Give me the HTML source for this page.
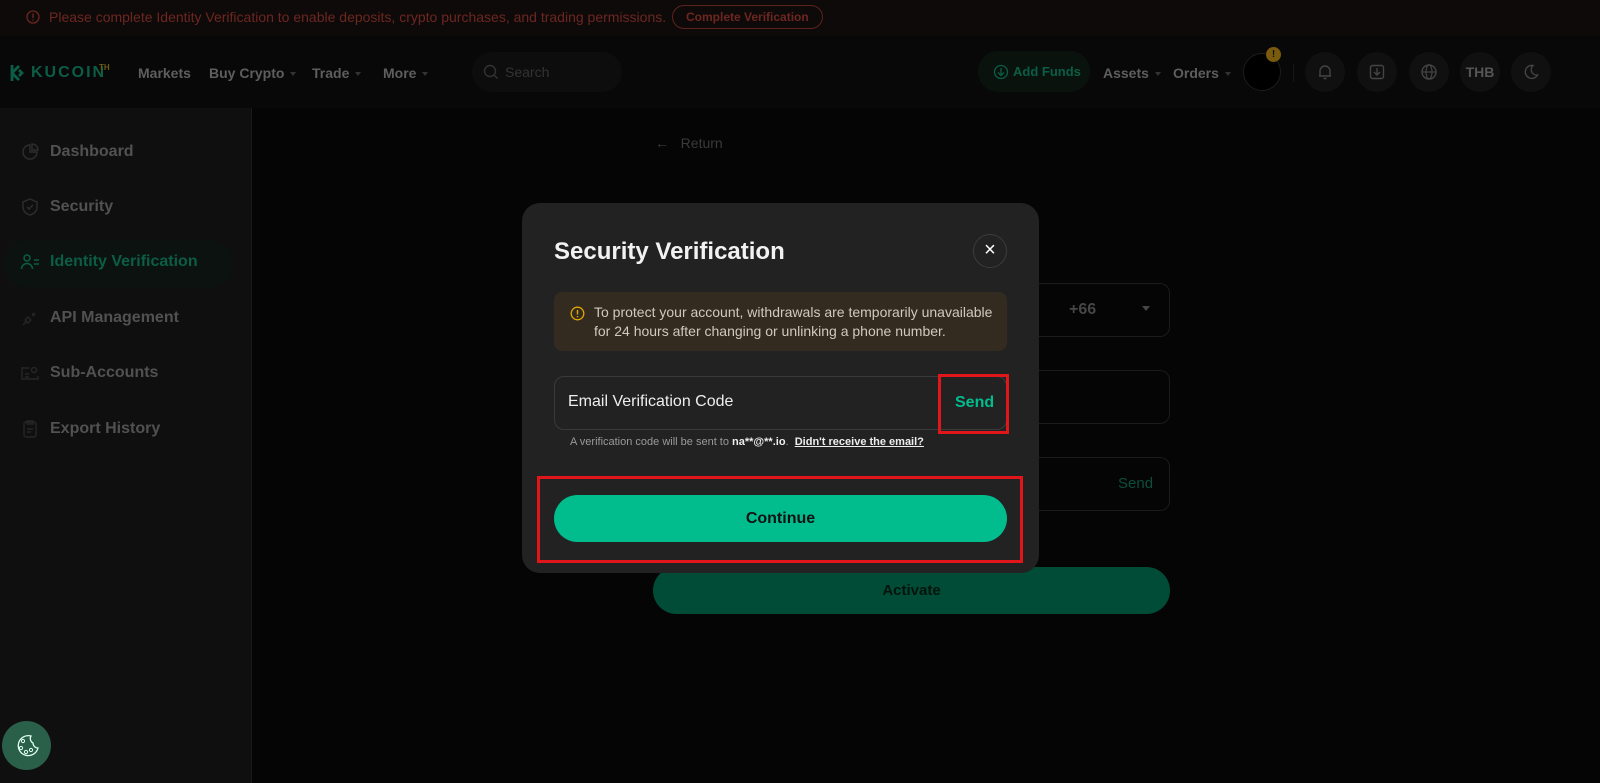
<!DOCTYPE html>
<html><head><meta charset="utf-8"><style>
*{box-sizing:border-box;margin:0;padding:0}
body{width:1600px;height:783px;overflow:hidden;background:#050505;font-family:"Liberation Sans",Arial,sans-serif;position:relative}
.abs{position:absolute}
.banner{left:0;top:0;width:1600px;height:36px;background:#0d0a09;color:#6e2620;font-size:14px}
.hdr{left:0;top:36px;width:1600px;height:72px;background:#080808}
.nav{color:#5e5e5e;font-size:14px;font-weight:bold}
.caret{display:inline-block;border:3px solid transparent;border-top:4px solid #333;margin-left:6px;vertical-align:-1px}
.icb{width:40px;height:40px;border-radius:20px;background:#101010;top:52px}
.side{left:0;top:108px;width:252px;height:675px;background:#0f0f0f;border-right:1px solid #1a1a1a}
.si{left:20px;color:#515151;font-size:16px;font-weight:bold;height:20px;display:flex;align-items:center}
.si svg{margin-right:10px}
.field{border:1px solid #1b1b1b;border-radius:10px;left:653px;width:517px}
.modal{left:522px;top:203px;width:517px;height:370px;background:#222;border-radius:18px}
</style></head><body>
<div class="abs banner">
 <svg class="abs" style="left:26px;top:10px" width="14" height="14" viewBox="0 0 14 14"><circle cx="7" cy="7" r="6" fill="none" stroke="#6e2620" stroke-width="1.3"/><path d="M7 3.5v4.5M7 9.5v1" stroke="#6e2620" stroke-width="1.4"/></svg>
 <span class="abs" style="left:49px;top:9px">Please complete Identity Verification to enable deposits, crypto purchases, and trading permissions.</span>
 <div class="abs" style="left:672px;top:5px;width:151px;height:24px;border:1px solid #5e221c;border-radius:12px;font-size:12px;font-weight:bold;line-height:22px;padding-left:13px">Complete Verification →</div>
</div>
<div class="abs hdr">
 <svg class="abs" style="left:9px;top:27px" width="20" height="20" viewBox="0 0 20 20"><path d="M3 2v16M3 10l7-7M3 10l7 7M10 7l3 3-3 3" stroke="#0b5e45" stroke-width="2.8" fill="none"/></svg>
 <span class="abs" style="left:31px;top:28px;color:#0b5e45;font-weight:bold;font-size:16px;letter-spacing:2px">KUCOIN</span><span class="abs" style="left:99px;top:27px;color:#6a5a10;font-size:8px;font-weight:bold">TH</span>
 <span class="abs nav" style="left:138px;top:29px">Markets</span>
 <span class="abs nav" style="left:209px;top:29px">Buy Crypto<i class="caret"></i></span>
 <span class="abs nav" style="left:312px;top:29px">Trade<i class="caret"></i></span>
 <span class="abs nav" style="left:383px;top:29px">More<i class="caret"></i></span>
 <div class="abs" style="left:472px;top:16px;width:150px;height:40px;border-radius:20px;background:#0d0d0d"></div>
 <svg class="abs" style="left:483px;top:28px" width="16" height="16" viewBox="0 0 16 16"><circle cx="7" cy="7" r="5.5" fill="none" stroke="#333" stroke-width="1.4"/><path d="M11 11l3.5 3.5" stroke="#333" stroke-width="1.4"/></svg>
 <span class="abs" style="left:505px;top:28px;color:#333;font-size:14px">Search</span>
 <div class="abs" style="left:978px;top:15px;width:112px;height:41px;border-radius:20px;background:#0a120e"></div>
 <svg class="abs" style="left:993px;top:28px" width="16" height="16" viewBox="0 0 16 16"><circle cx="8" cy="8" r="6.5" fill="none" stroke="#0b5e45" stroke-width="1.3"/><path d="M8 4v7M5 8.5l3 3 3-3" stroke="#0b5e45" stroke-width="1.3" fill="none"/></svg>
 <span class="abs" style="left:1013px;top:28px;color:#0b5e45;font-weight:bold;font-size:13px">Add Funds</span>
 <span class="abs nav" style="left:1103px;top:29px">Assets<i class="caret"></i></span>
 <span class="abs nav" style="left:1173px;top:29px">Orders<i class="caret"></i></span>
 <div class="abs" style="left:1243px;top:17px;width:38px;height:38px;border-radius:19px;background:#000;border:1px solid #1c1c1c"></div>
 <div class="abs" style="left:1266px;top:11px;width:15px;height:15px;border-radius:8px;background:#7a5a0c;color:#111;font-size:10px;text-align:center;line-height:15px;font-weight:bold">!</div>
 <div class="abs" style="left:1293px;top:28px;width:1px;height:18px;background:#151515"></div>
</div>
<div class="abs icb" style="left:1305px"><svg style="margin:11px" width="18" height="18" viewBox="0 0 18 18"><path d="M4 13V8a5 5 0 0110 0v5H4zM3 13h12M7.5 15.5h3" stroke="#444" stroke-width="1.4" fill="none"/></svg></div>
<div class="abs icb" style="left:1357px"><svg style="margin:11px" width="18" height="18" viewBox="0 0 18 18"><rect x="2.5" y="2.5" width="13" height="13" rx="2" stroke="#444" stroke-width="1.4" fill="none"/><path d="M9 5v7M6 9l3 3 3-3" stroke="#444" stroke-width="1.4" fill="none"/></svg></div>
<div class="abs icb" style="left:1409px"><svg style="margin:11px" width="18" height="18" viewBox="0 0 18 18"><circle cx="9" cy="9" r="7" stroke="#444" stroke-width="1.4" fill="none"/><ellipse cx="9" cy="9" rx="3" ry="7" stroke="#444" stroke-width="1.2" fill="none"/><path d="M2 9h14" stroke="#444" stroke-width="1.2"/></svg></div>
<div class="abs icb" style="left:1460px;color:#555;font-weight:bold;font-size:14px;text-align:center;line-height:40px">THB</div>
<div class="abs icb" style="left:1511px"><svg style="margin:11px" width="18" height="18" viewBox="0 0 18 18"><path d="M11 2.5A6.5 6.5 0 1015.5 12 5.5 5.5 0 0111 2.5z" stroke="#444" stroke-width="1.4" fill="none"/></svg></div>

<div class="abs side"></div>
<div class="abs" style="left:4px;top:240px;width:230px;height:48px;border-radius:24px;background:#0b120f"></div>
<div class="abs si" style="top:142px"><svg width="20" height="20" viewBox="0 0 20 20"><path d="M10 3a7 7 0 107 7h-7z M12 2v6h6a6 6 0 00-6-6z" stroke="#2e2e2e" stroke-width="1.4" fill="none"/></svg>Dashboard</div>
<div class="abs si" style="top:197px"><svg width="20" height="20" viewBox="0 0 20 20"><path d="M10 2l7 3v5c0 4-3 7-7 8-4-1-7-4-7-8V5z M7 10l2 2 4-4" stroke="#2e2e2e" stroke-width="1.4" fill="none"/></svg>Security</div>
<div class="abs si" style="top:252px;color:#0b5e45"><svg width="20" height="20" viewBox="0 0 20 20"><circle cx="7" cy="6" r="3" stroke="#0b5e45" stroke-width="1.5" fill="none"/><path d="M1.5 17a5.5 5.5 0 0111 0M14 8h5M14 12h5" stroke="#0b5e45" stroke-width="1.5" fill="none"/></svg>Identity Verification</div>
<div class="abs si" style="top:308px"><svg width="20" height="20" viewBox="0 0 20 20"><path d="M3 17l4-4M8 9l3 3-3 3-3-3zM12 8l3-3M12 5l3 3" stroke="#262626" stroke-width="1.4" fill="none"/></svg>API Management</div>
<div class="abs si" style="top:363px"><svg width="20" height="20" viewBox="0 0 20 20"><path d="M2 5h7M2 4v12h16v-3M5 11h4M5 14h4" stroke="#262626" stroke-width="1.4" fill="none"/><circle cx="14" cy="7" r="2.5" stroke="#262626" stroke-width="1.4" fill="none"/></svg>Sub-Accounts</div>
<div class="abs si" style="top:419px"><svg width="20" height="20" viewBox="0 0 20 20"><rect x="4" y="3" width="12" height="15" rx="2" stroke="#262626" stroke-width="1.4" fill="none"/><path d="M7 2h6v3H7zM7 10h6M7 13h4" stroke="#262626" stroke-width="1.4" fill="none"/></svg>Export History</div>
<div class="abs" style="left:2px;top:721px;width:49px;height:49px;border-radius:25px;background:#2a5f4a"><svg style="margin:10px" width="29" height="29" viewBox="0 0 29 29"><path d="M19 5a10 10 0 1 0 7 12 5 5 0 0 1-5-5 5 5 0 0 1-2-7z" stroke="#dfe" stroke-width="1.3" fill="none"/><circle cx="11" cy="10" r="1.6" stroke="#dfe" fill="none"/><circle cx="9" cy="17" r="1.6" stroke="#dfe" fill="none"/><circle cx="14" cy="21" r="1.6" stroke="#dfe" fill="none"/><circle cx="19" cy="19" r="1.6" stroke="#dfe" fill="none"/></svg></div>

<span class="abs" style="left:655px;top:135px;color:#3a3a3a;font-size:14px">←&nbsp;&nbsp;&nbsp;Return</span>
<div class="abs field" style="top:283px;height:54px"><span class="abs" style="left:415px;top:17px;color:#464646;font-size:16px;font-weight:bold">+66</span><i class="abs" style="left:488px;top:22px;border:4px solid transparent;border-top:5px solid #464646"></i></div>
<div class="abs field" style="top:370px;height:54px"></div>
<div class="abs field" style="top:457px;height:54px"><span class="abs" style="left:464px;top:17px;color:#0b4e3a;font-size:15px">Send</span></div>
<div class="abs" style="left:653px;top:567px;width:517px;height:47px;border-radius:24px;background:#004c36;color:#06140e;font-weight:bold;font-size:15px;text-align:center;line-height:47px">Activate</div>

<div class="abs modal">
 <div class="abs" style="left:32px;top:35px;color:#f2f2f2;font-size:24px;font-weight:bold">Security Verification</div>
 <div class="abs" style="left:451px;top:31px;width:34px;height:34px;border-radius:17px;border:1px solid #3c3c3c;color:#fff;text-align:center;line-height:31px;font-size:20px">×</div>
 <div class="abs" style="left:32px;top:89px;width:453px;height:59px;background:#332b20;border-radius:8px">
  <svg class="abs" style="left:16px;top:14px" width="15" height="15" viewBox="0 0 15 15"><circle cx="7.5" cy="7.5" r="6.3" stroke="#e0a800" stroke-width="1.3" fill="none"/><path d="M7.5 4v4.5M7.5 10v1.2" stroke="#e0a800" stroke-width="1.4"/></svg>
  <div class="abs" style="left:40px;top:11px;color:#cfc9bf;font-size:14px;line-height:19px">To protect your account, withdrawals are temporarily unavailable<br>for 24 hours after changing or unlinking a phone number.</div>
 </div>
 <div class="abs" style="left:32px;top:173px;width:453px;height:54px;border:1px solid #3a3a3a;border-radius:10px"><span class="abs" style="left:13px;top:16px;color:#eee;font-size:16px">Email Verification Code</span><span class="abs" style="left:400px;top:17px;color:#01bc8d;font-size:16px;font-weight:bold">Send</span></div>
 <div class="abs" style="left:416px;top:171px;width:71px;height:60px;border:3px solid #e0161b"></div>
 <div class="abs" style="left:48px;top:233px;color:#9a9a9a;font-size:11px">A verification code will be sent to <b style="color:#eee">na**@**.io</b>.&nbsp; <b style="color:#eee;text-decoration:underline">Didn't receive the email?</b></div>
 <div class="abs" style="left:32px;top:292px;width:453px;height:47px;border-radius:24px;background:#01bc8d;color:#111;font-size:16px;font-weight:bold;text-align:center;line-height:47px">Continue</div>
 <div class="abs" style="left:15px;top:273px;width:486px;height:87px;border:3px solid #e0161b"></div>
</div>
</body></html>
